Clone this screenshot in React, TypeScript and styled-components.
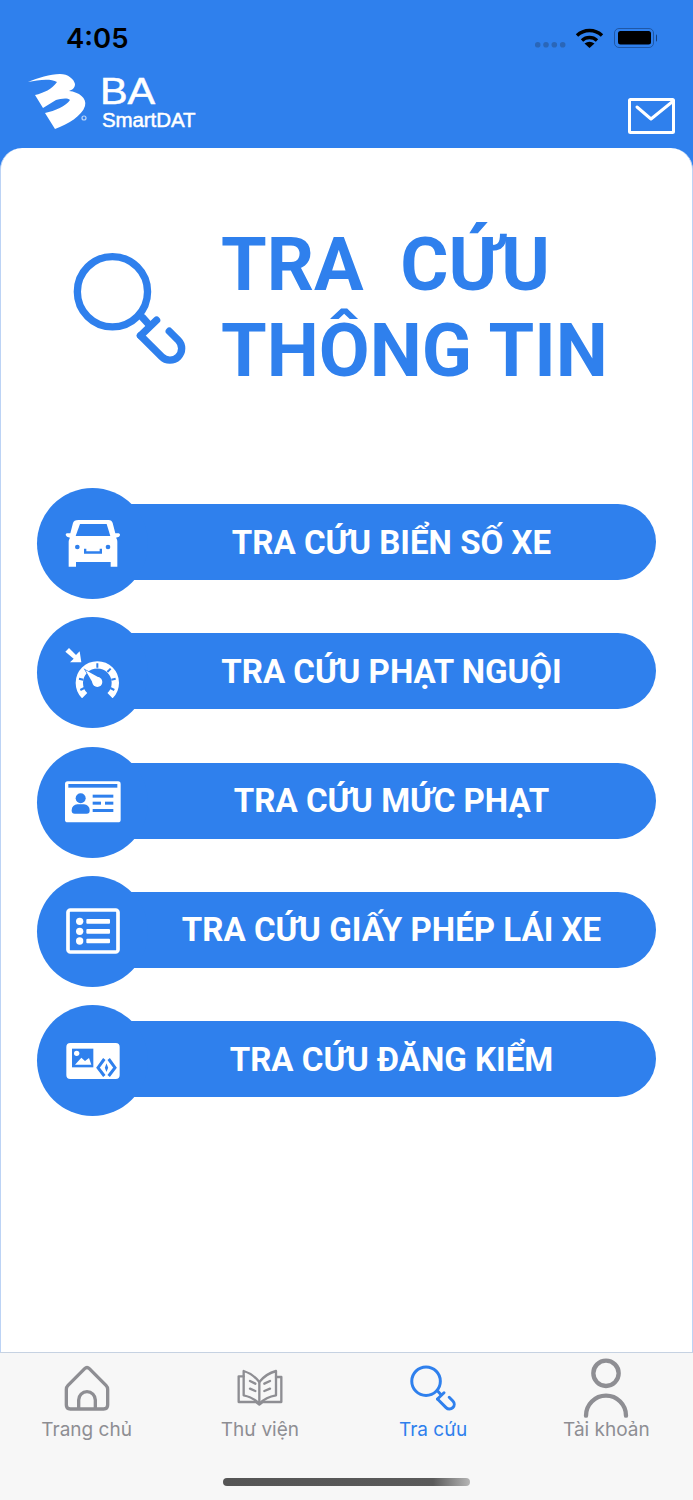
import React from "react";
import styled, { createGlobalStyle } from "styled-components";

const BLUE = "#2f80ed";
const GREY = "#8e8e93";

const Global = createGlobalStyle`
  html, body { margin: 0; padding: 0; background: ${BLUE}; }
  * { box-sizing: border-box; }
`;

const Screen = styled.div`
  width: 693px;
  height: 1500px;
  display: flex;
  flex-direction: column;
  overflow: hidden;
  background: ${BLUE};
  font-family: Roboto, "Liberation Sans", sans-serif;
`;

const Header = styled.header`
  height: 148px;
  flex: none;
  display: flex;
  flex-direction: column;
`;

const StatusBar = styled.div`
  height: 72px;
  flex: none;
  display: flex;
  align-items: flex-start;
  justify-content: space-between;
  padding: 22px 36px 0 66px;
`;

const Clock = styled.span`
  font-family: Inter, "Liberation Sans", sans-serif;
  font-size: 27.5px;
  font-weight: 600;
  line-height: 32px;
  color: #000;
`;

const StatusIcons = styled.div`
  display: flex;
  align-items: flex-start;
  padding-top: 6px;
`;

const BrandRow = styled.div`
  display: flex;
  justify-content: space-between;
  align-items: flex-start;
  padding: 0 18px 0 28px;
`;

const Brand = styled.div`
  display: flex;
  align-items: flex-start;
  gap: 12px;
`;

const BrandMark = styled.svg`
  display: block;
  margin-top: 2px;
`;

const BrandText = styled.div`
  display: flex;
  flex-direction: column;
  color: #fff;
  font-family: "Liberation Sans", sans-serif;
  padding-top: 3px;
`;

const BrandBA = styled.span`
  font-size: 36px;
  line-height: 34px;
  transform: scaleX(1.15);
  transform-origin: left center;
  -webkit-text-stroke: 0.5px #fff;
`;

const BrandSub = styled.span`
  font-size: 20.5px;
  line-height: 21px;
  font-weight: 400;
  letter-spacing: -0.1px;
  padding-left: 2px;
  -webkit-text-stroke: 0.5px #fff;
`;

const MailIcon = styled.svg`
  margin-top: 26px;
  display: block;
`;

const Panel = styled.main`
  flex: 1;
  background: #fff;
  border: 1px solid #bcd3f5;
  border-top: none;
  border-bottom: none;
  border-radius: 22px 22px 0 0;
  padding-top: 74px;
  display: flex;
  flex-direction: column;
`;

const Hero = styled.section`
  display: flex;
  align-items: center;
  gap: 35px;
  padding-left: 72px;
`;

const HeroIconBox = styled.div`
  flex: none;
  display: flex;
`;

const Title = styled.h1`
  margin: 0;
  font-size: 73.8px;
  line-height: 86px;
  font-weight: 700;
  color: ${BLUE};
  white-space: pre;
`;

const Menu = styled.nav`
  margin-top: 94px;
  padding: 0 36px;
  display: flex;
  flex-direction: column;
  gap: 18.25px;
`;

const Row = styled.div`
  display: flex;
  align-items: center;
  height: 111px;
`;

const Disc = styled.div`
  width: 111px;
  height: 111px;
  flex: none;
  border-radius: 50%;
  background: ${BLUE};
  display: flex;
  align-items: center;
  justify-content: center;
  position: relative;
  z-index: 1;
`;

const Pill = styled.div`
  flex: 1;
  height: 76px;
  margin-left: -21px;
  margin-bottom: 3px;
  background: ${BLUE};
  border-radius: 0 38px 38px 0;
  display: flex;
  align-items: center;
  justify-content: center;
  color: #fff;
  font-size: 33.1px;
  font-weight: 700;
`;

const TabBar = styled.footer`
  height: 148px;
  flex: none;
  background: #f7f7f7;
  border-top: 1px solid #c6d2e2;
  padding-top: 4px;
  display: flex;
  flex-direction: column;
  align-items: center;
`;

const Tabs = styled.div`
  width: 100%;
  display: grid;
  grid-template-columns: repeat(4, 1fr);
`;

const Tab = styled.div<{ $active?: boolean }>`
  display: flex;
  flex-direction: column;
  align-items: center;
  color: ${(p) => (p.$active ? BLUE : GREY)};
`;

const TabIconSlot = styled.div`
  height: 61px;
  display: flex;
  align-items: center;
  justify-content: center;
`;

const TabLabel = styled.span`
  font-family: Inter, "Liberation Sans", sans-serif;
  font-size: 19px;
  line-height: 24px;
  white-space: nowrap;
`;

const HomeBar = styled.div`
  width: 247px;
  height: 8px;
  margin-top: 36px;
  border-radius: 4px;
  background: linear-gradient(90deg, #555 0%, #5a5a5a 85%, #b5b5b5 100%);
`;

const SearchGlyph = ({ size }: { size: number }) => (
  <svg width={size} height={size} viewBox="70 66 338 338" fill="none" stroke={BLUE} strokeWidth={22} strokeLinecap="round" strokeLinejoin="round">
    <circle cx={188} cy={185} r={105} />
    <path d="M278 262L298 284" />
    <path d="M272 316L320 270" />
    <path d="M272 316L335 379A35 35 0 0 0 385 330L358 303" />
  </svg>
);

const icons: Record<string, React.ReactNode> = {
  car: (
    <svg width={56} height={47} viewBox="105 118 168 141">
      <path fill="#fff" d="M146 118h90c6 0 10 3 12 9l8 31h10a5 5 0 0 1 4 6l-3 4-9 3c3 4 4 8 4 12v75h-20v-14H138v14h-22v-75c0-4 2-8 4-12l-9-3-4-5a5 5 0 0 1 4-5h10l8-31c2-6 6-9 17-9z" />
      <path fill={BLUE} d="M150 130h80l11 36H137z" />
      <circle cx={142} cy={199} r={7} fill={BLUE} />
      <circle cx={234} cy={199} r={7} fill={BLUE} />
      <path fill={BLUE} d="M162 204h7v8h40v-8h7v15h-54z" />
    </svg>
  ),
  speed: (
    <svg width={55} height={51} viewBox="105 500 165 153">
      <path fill="#fff" d="M106 514l11-11 21 21 11-11 5 33h-34l11-11z" />
      <path fill="none" stroke="#fff" strokeWidth={22} d="M164 646A54 54 0 1 1 240 646" />
      <path stroke={BLUE} strokeWidth={6} fill="none" d="M202 562V549M232 575L242 565M244 598L257 595M160 598L147 595M241 623L253 629M163 623L151 629" />
      <path fill="#fff" stroke={BLUE} strokeWidth={4} paintOrder="stroke" d="M166 569L208 592 192 614z" />
      <circle cx={202} cy={605} r={15} fill="#fff" />
    </svg>
  ),
  card: (
    <svg width={56} height={42} viewBox="105 122 168 124">
      <rect x={105} y={122} width={167} height={123} rx={8} fill="#fff" />
      <g fill={BLUE}>
        <rect x={115} y={130} width={147} height={11} />
        <circle cx={152} cy={173} r={15} />
        <path d="M125 208a17 17 0 0 1 17-17h20a17 17 0 0 1 17 17v2a9 9 0 0 1-9 9h-36a9 9 0 0 1-9-9z" />
        <rect x={188} y={162} width={62} height={9} />
        <rect x={188} y={183} width={25} height={9} />
        <rect x={225} y={183} width={25} height={9} />
        <rect x={188} y={205} width={62} height={9} />
      </g>
    </svg>
  ),
  list: (
    <svg width={54} height={46} viewBox="106 501 162 138">
      <rect x={112} y={507} width={150} height={126} rx={7} fill="none" stroke="#fff" strokeWidth={11} />
      <g fill="#fff">
        <circle cx={147} cy={541} r={11} />
        <circle cx={147} cy={571} r={11} />
        <circle cx={147} cy={600} r={11} />
        <rect x={167} y={534} width={71} height={14} rx={3} />
        <rect x={167} y={564} width={71} height={14} rx={3} />
        <rect x={167} y={593} width={71} height={14} rx={3} />
      </g>
    </svg>
  ),
  doc: (
    <svg width={54} height={36} viewBox="109 907 162 108">
      <rect x={110} y={907} width={160} height={108} rx={12} fill="#fff" />
      <rect x={127} y={924} width={64} height={56} fill={BLUE} />
      <circle cx={141} cy={938} r={8} fill="#fff" />
      <path fill="#fff" d="M136 972l19-21 11 10 12-9 7 20z" />
      <g fill="none" stroke={BLUE} strokeWidth={9}>
        <path d="M224 955L205 981 224 1006" />
        <path d="M237 955L256 981 237 1006" />
      </g>
      <path fill={BLUE} d="M230.5 968l5 13-5 13-5-13z" />
    </svg>
  ),
};

const items = [
  { icon: "car", label: "TRA CỨU BIỂN SỐ XE" },
  { icon: "speed", label: "TRA CỨU PHẠT NGUỘI" },
  { icon: "card", label: "TRA CỨU MỨC PHẠT" },
  { icon: "list", label: "TRA CỨU GIẤY PHÉP LÁI XE" },
  { icon: "doc", label: "TRA CỨU ĐĂNG KIỂM" },
];

export default function App() {
  return (
    <Screen>
      <Global />
      <Header>
        <StatusBar>
          <Clock>4:05</Clock>
          <StatusIcons>
            <svg width={122} height={20} viewBox="534 28 122 20">
              <g fill="#2a66b8">
                <circle cx={536.7} cy={44.7} r={2.8} />
                <circle cx={545} cy={44.7} r={2.8} />
                <circle cx={553.3} cy={44.7} r={2.8} />
                <circle cx={561.7} cy={44.7} r={2.8} />
              </g>
              <g fill="none" stroke="#000" strokeWidth={3.4}>
                <path d="M576 35.5A18 18 0 0 1 601 35.5" />
                <path d="M581 40.5A11 11 0 0 1 596 40.5" />
              </g>
              <path d="M588.5 48L583.5 43.5Q588.5 40 593.5 43.5Z" fill="#000" />
              <rect x={613.5} y={28.5} width={39} height={19} rx={4.5} fill="none" stroke="#1f57a6" />
              <rect x={617} y={31} width={33} height={13.5} rx={2.5} fill="#000" />
              <rect x={655} y={34.5} width={2} height={7} rx={1} fill="#14407e" />
            </svg>
          </StatusIcons>
        </StatusBar>
        <BrandRow>
          <Brand>
            <BrandMark width={60} height={56} viewBox="28 74 60 56">
              <path fill="#fff" d="M28 82C38 78 50 74 60 74 68 74 74 79 75 84 75 88 72 90 69 91 79 92 87 98 85 106 82 116 68 124 55 129L45 113C55 111 66 106 70 100 67 97 60 99 56 100L43 108 35 95C44 93 52 89 57 82 50 78 38 80 28 82Z" />
              <circle cx={84} cy={118} r={2} fill="#2f80ed" stroke="#b9d3f8" strokeWidth={1.2} />
            </BrandMark>
            <BrandText>
              <BrandBA>BA</BrandBA>
              <BrandSub>SmartDAT</BrandSub>
            </BrandText>
          </Brand>
          <MailIcon width={47} height={36} viewBox="628 98 47 36">
            <rect x={629.5} y={99.5} width={44} height={33} rx={1} fill="none" stroke="#fff" strokeWidth={3} />
            <path d="M637 107L651 119 672 102" fill="none" stroke="#fff" strokeWidth={3} strokeLinecap="round" strokeLinejoin="round" />
          </MailIcon>
        </BrandRow>
      </Header>

      <Panel>
        <Hero>
          <HeroIconBox>
            <SearchGlyph size={113} />
          </HeroIconBox>
          <Title>{"TRA  CỨU\nTHÔNG TIN"}</Title>
        </Hero>
        <Menu>
          {items.map((it) => (
            <Row key={it.label}>
              <Disc>{icons[it.icon]}</Disc>
              <Pill>{it.label}</Pill>
            </Row>
          ))}
        </Menu>
      </Panel>

      <TabBar>
        <Tabs>
          <Tab>
            <TabIconSlot>
              <svg width={46} height={46} viewBox="193 73 138 138" fill="none" stroke={GREY} strokeWidth={10} strokeLinejoin="round">
                <path d="M255 84L205 134Q200 139 200 146V193Q200 205 212 205H312Q324 205 324 193V146Q324 139 319 134L269 84Q262 77 255 84Z" />
                <path d="M237 205V178A25 25 0 0 1 287 178V205" />
              </svg>
            </TabIconSlot>
            <TabLabel>Trang chủ</TabLabel>
          </Tab>
          <Tab>
            <TabIconSlot>
              <svg width={46} height={38} viewBox="713 86 138 114" fill="none" stroke={GREY} strokeWidth={7} strokeLinejoin="round" strokeLinecap="round">
                <path d="M733 108H718V185H770L780 193 790 185H846V110H830" />
                <path d="M780 125Q760 100 733 92V165Q760 170 780 190Z" />
                <path d="M780 125Q800 100 830 92V165Q800 170 780 190" />
                <path d="M752 122L768 130M752 145L768 152M795 130L812 122M795 152L812 145" />
              </svg>
            </TabIconSlot>
            <TabLabel>Thư viện</TabLabel>
          </Tab>
          <Tab $active>
            <TabIconSlot>
              <SearchGlyph size={46} />
            </TabIconSlot>
            <TabLabel>Tra cứu</TabLabel>
          </Tab>
          <Tab>
            <TabIconSlot>
              <svg width={46} height={60} viewBox="711 52 138 180" fill="none" stroke={GREY} strokeWidth={13} strokeLinecap="round">
                <circle cx={780} cy={98} r={38} />
                <path d="M720 225A60 60 0 0 1 840 225" />
              </svg>
            </TabIconSlot>
            <TabLabel>Tài khoản</TabLabel>
          </Tab>
        </Tabs>
        <HomeBar />
      </TabBar>
    </Screen>
  );
}
